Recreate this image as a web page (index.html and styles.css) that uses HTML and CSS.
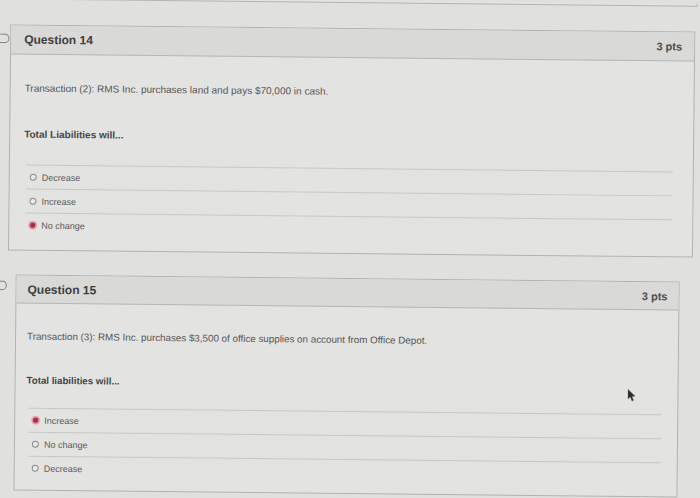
FILE: index.html
```html
<!DOCTYPE html>
<html lang="en">
<head>
<meta charset="utf-8">
<title>Quiz</title>
<link rel="stylesheet" href="styles.css">
</head>
<body>
<div class="page">
  <div class="prev-card"></div>

  <div class="question question--near">
    <svg class="flag" width="16" height="10" viewBox="0 0 16 10"><rect x="0.75" y="0.75" width="14" height="8.5" rx="4.2" fill="none" stroke="#8a8a88" stroke-width="1.1"/></svg>
    <div class="q-header">
      <span class="q-title">Question 14</span>
      <span class="q-pts">3 pts</span>
    </div>
    <div class="q-body">
      <p class="q-text">Transaction (2): RMS Inc. purchases land and pays $70,000 in cash.</p>
      <p class="q-prompt">Total Liabilities will...</p>
      <div class="answers">
        <div class="answer"><span class="radio"></span><span class="label">Decrease</span></div>
        <div class="answer"><span class="radio"></span><span class="label">Increase</span></div>
        <div class="answer"><span class="radio radio--checked"></span><span class="label">No change</span></div>
      </div>
    </div>
  </div>

  <div class="question question--far">
    <svg class="flag" width="16" height="10" viewBox="0 0 16 10"><rect x="0.75" y="0.75" width="14" height="8.5" rx="4.2" fill="none" stroke="#8a8a88" stroke-width="1.1"/></svg>
    <div class="q-header">
      <span class="q-title">Question 15</span>
      <span class="q-pts">3 pts</span>
    </div>
    <div class="q-body">
      <p class="q-text">Transaction (3): RMS Inc. purchases $3,500 of office supplies on account from Office Depot.</p>
      <p class="q-prompt">Total liabilities will...</p>
      <div class="answers">
        <div class="answer"><span class="radio radio--checked"></span><span class="label">Increase</span></div>
        <div class="answer"><span class="radio"></span><span class="label">No change</span></div>
        <div class="answer"><span class="radio"></span><span class="label">Decrease</span></div>
      </div>
    </div>
    <svg class="cursor" width="9" height="13" viewBox="0 0 9 13"><path d="M0.5 0.5 L0.5 10 L2.8 7.8 L4.6 12 L6 11.3 L4.3 7.3 L7.5 7.2 Z" fill="#2a2a2a" stroke="#555" stroke-width="0.5"/></svg>
  </div>
</div>
</body>
</html>
```

FILE: styles.css
```css
html, body {
  margin: 0;
  padding: 0;
  background: #e0e0de;
  font-family: "Liberation Sans", Arial, sans-serif;
  color: #4a4a4a;
  overflow: hidden;
}

.page {
  width: 700px;
  height: 498px;
  transform: rotate(0.6deg);
  transform-origin: 350px 249px;
}

.prev-card {
  width: 694px;
  height: 2px;
  border-bottom: 1px solid #b3b3b1;
  border-right: 1px solid #b3b3b1;
  background: #e3e3e1;
}

.question {
  position: relative;
  background: #e3e3e1;
  border: 1px solid #b2b2b0;
}

.question--near {
  margin: 25px 0 0 8px;
  width: 683px;
}

.question--far {
  margin: 24px 0 0 16px;
  width: 662px;
}

.flag {
  position: absolute;
  top: 8px;
}

.question--near .flag { left: -17px; }
.question--far .flag { left: -25px; top: 5px; }

.q-header {
  display: flex;
  align-items: center;
  justify-content: space-between;
  background: #d9d9d7;
  border-bottom: 1px solid #b7b7b5;
}

.question--near .q-header {
  height: 28px;
  padding: 0 12px 0 13px;
}

.question--far .q-header {
  height: 27px;
  padding: 0 11px 0 11px;
}

.q-title {
  font-weight: bold;
  font-size: 12px;
  color: #3e3e3e;
}

.q-pts {
  font-weight: bold;
  font-size: 11px;
  color: #4c4c4c;
}

.q-body {
  display: flex;
  flex-direction: column;
}

.question--near .q-body { padding: 0 20px 13px 14px; }
.question--far .q-body { padding: 0 16px 10px 11px; }

.q-text {
  margin: 0;
  line-height: 14px;
  color: #555;
}

.question--near .q-text { font-size: 10px; margin-top: 27px; }
.question--far .q-text { font-size: 9.8px; margin-top: 26px; }

.q-prompt {
  margin: 0;
  font-weight: bold;
  line-height: 14px;
  color: #454545;
}

.question--near .q-prompt { font-size: 10px; margin-top: 32px; }
.question--far .q-prompt { font-size: 9.7px; margin-top: 30px; }

.question--near .answers { margin: 23px 0 0 2px; }
.question--far .answers { margin: 20px 0 0 2px; }

.answer {
  display: flex;
  align-items: center;
  height: 23px;
  border-top: 1px solid #c8c8c6;
  padding-left: 4px;
  gap: 5px;
  font-size: 9px;
  color: #5a5a5a;
}

.radio {
  width: 5px;
  height: 5px;
  border: 1px solid #8c8c8a;
  border-radius: 50%;
  background: #e8e8e6;
}

.radio--checked {
  background: #9e2f48;
  border: 1px solid #e08a9c;
  box-shadow: 0 0 0 1px #eaa6b3;
}

.cursor {
  position: absolute;
  left: 612px;
  top: 107px;
}
```
